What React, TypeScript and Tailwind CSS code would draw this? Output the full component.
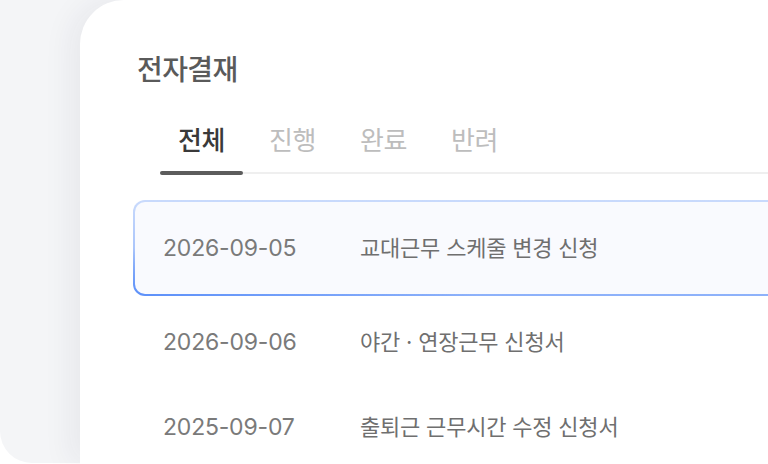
import React from "react";

const font = { fontFamily: '"Inter", "Noto Sans CJK KR", sans-serif' };

const tabs = ["전체", "진행", "완료", "반려"];

const rows = [
  { date: "2025-09-07", title: "출퇴근 근무시간 수정 신청서" },
];

export default function App() {
  return (
    <div className="w-[768px] h-[464px] bg-white overflow-hidden" style={font}>
      <div className="h-[463px] bg-[#f4f5f7] rounded-bl-[32px] pl-[80px] flex">
        <div className="flex-1 h-[464px] bg-white rounded-tl-[44px] shadow-[-10px_0_30px_rgba(30,40,60,0.06)] pl-[53px] pt-[51px] overflow-hidden">
          <h1 className="ml-[4px] text-[28px] leading-[38px] font-medium text-[#5a5a5a] tracking-[-0.6px]">
            전자결재
          </h1>
          <div className="ml-[27px] mt-[33px] w-[700px] flex border-b-2 border-[#efefef]">
            {tabs.map((t, i) => (
              <div
                key={t}
                className={
                  i === 0
                    ? "relative w-[83px] mr-[8px] h-[50px] pt-[3px] flex items-start justify-center text-[26px] leading-[32px] font-medium text-[#3a3a3a] tracking-[-0.5px]"
                    : "relative w-[83px] mr-[8px] h-[50px] pt-[3px] flex items-start justify-center text-[26px] leading-[32px] font-normal text-[#bdbdbd] tracking-[-0.5px]"
                }
              >
                {t}
                {i === 0 && (
                  <span className="absolute left-0 right-0 bottom-[-3px] h-[4px] rounded-full bg-[#5c5c5c]" />
                )}
              </div>
            ))}
          </div>
          <div className="mt-[26px] w-[700px] h-[96px] rounded-[12px] p-[2px] bg-[linear-gradient(to_top_right,#5b8ff9_0%,rgba(91,143,249,0)_25%),linear-gradient(to_bottom,#c9dafc,#8db1fa)]">
            <div className="h-full rounded-[10px] bg-[#f9fafe] flex items-center pl-[28px]">
              <span className="w-[197px] text-[23px] text-[#7a7a7a] tracking-[-0.2px]">2026-09-05</span>
              <span className="text-[22px] text-[#6f6f6f] tracking-[-0.2px]">교대근무 스케줄 변경 신청</span>
            </div>
          </div>
          <div className="mt-[4px] h-[85px] flex items-center pl-[30px]">
            <span className="w-[197px] text-[23px] text-[#7a7a7a] tracking-[-0.2px]">2026-09-06</span>
            <span className="text-[22px] text-[#6f6f6f] tracking-[-0.2px]">야간 · 연장근무 신청서</span>
          </div>
          {rows.map((r) => (
            <div key={r.date} className="h-[85px] flex items-center pl-[30px]">
              <span className="w-[197px] text-[23px] text-[#7a7a7a] tracking-[-0.2px]">{r.date}</span>
              <span className="text-[22px] text-[#6f6f6f] tracking-[-0.2px]">{r.title}</span>
            </div>
          ))}
        </div>
      </div>
    </div>
  );
}
